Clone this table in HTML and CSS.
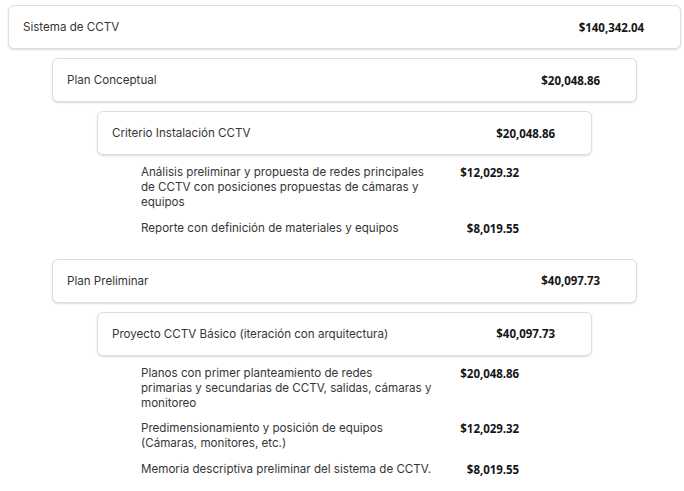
FILE: index.html
```html
<!DOCTYPE html>
<html lang="es">
<head>
<meta charset="utf-8">
<title>Sistema de CCTV</title>
<link rel="stylesheet" href="styles.css">
</head>
<body>
<div class="tree">
  <div class="box"><span class="label">Sistema de CCTV</span><span class="amount">$140,342.04</span></div>
  <div class="children lvl1">
    <div class="group">
      <div class="box"><span class="label">Plan Conceptual</span><span class="amount">$20,048.86</span></div>
      <div class="children lvl2">
        <div class="box"><span class="label">Criterio Instalación CCTV</span><span class="amount">$20,048.86</span></div>
        <div class="leaves">
          <div class="leaf"><span class="label">Análisis preliminar y propuesta de redes principales<br>de CCTV con posiciones propuestas de cámaras y<br>equipos</span><span class="amount">$12,029.32</span></div>
          <div class="leaf"><span class="label">Reporte con definición de materiales y equipos</span><span class="amount">$8,019.55</span></div>
        </div>
      </div>
    </div>
    <div class="group">
      <div class="box"><span class="label">Plan Preliminar</span><span class="amount">$40,097.73</span></div>
      <div class="children lvl2">
        <div class="box"><span class="label">Proyecto CCTV Básico (iteración con arquitectura)</span><span class="amount">$40,097.73</span></div>
        <div class="leaves">
          <div class="leaf"><span class="label">Planos con primer planteamiento de redes<br>primarias y secundarias de CCTV, salidas, cámaras y<br>monitoreo</span><span class="amount">$20,048.86</span></div>
          <div class="leaf"><span class="label">Predimensionamiento y posición de equipos<br>(Cámaras, monitores, etc.)</span><span class="amount">$12,029.32</span></div>
          <div class="leaf"><span class="label">Memoria descriptiva preliminar del sistema de CCTV.</span><span class="amount">$8,019.55</span></div>
        </div>
      </div>
    </div>
  </div>
</div>
</body>
</html>
```
FILE: styles.css
```css
html, body {
  background: #ffffff;
}
body {
  margin: 0;
  padding: 5px 3px 0 8px;
  font-family: Inter, "Open Sans", sans-serif;
  font-size: 11.6px;
  color: #363636;
}
.tree {
  display: flex;
  flex-direction: column;
  gap: 9px;
}
.box {
  box-sizing: border-box;
  height: 44px;
  display: flex;
  align-items: center;
  justify-content: space-between;
  padding: 0 36px 0 14px;
  border: 1px solid #dedede;
  border-radius: 6px;
  background: #ffffff;
  box-shadow: 0 1px 2px rgba(0, 0, 0, 0.14);
}
.label {
  line-height: 15px;
}
.box .label {
  padding-top: 1px;
}
.amount {
  font-family: "Open Sans", Inter, sans-serif;
  font-weight: 700;
  font-size: 11.5px;
  letter-spacing: -0.05px;
  color: #161616;
  line-height: 15px;
}
.children {
  display: flex;
  flex-direction: column;
  gap: 9px;
}
.lvl1 {
  margin: 0 44px;
}
.lvl2 {
  margin: 0 45px;
}
.group {
  display: flex;
  flex-direction: column;
  gap: 9px;
}
.group + .group {
  margin-top: 14px;
}
.leaves {
  display: flex;
  flex-direction: column;
  gap: 10.5px;
  padding: 1px 0 0 44px;
}
.leaf {
  display: grid;
  grid-template-columns: 300px 78px;
  align-items: start;
}
.leaf .label {
  padding-right: 4px;
  white-space: nowrap;
}
.leaf .amount {
  text-align: right;
}
```
